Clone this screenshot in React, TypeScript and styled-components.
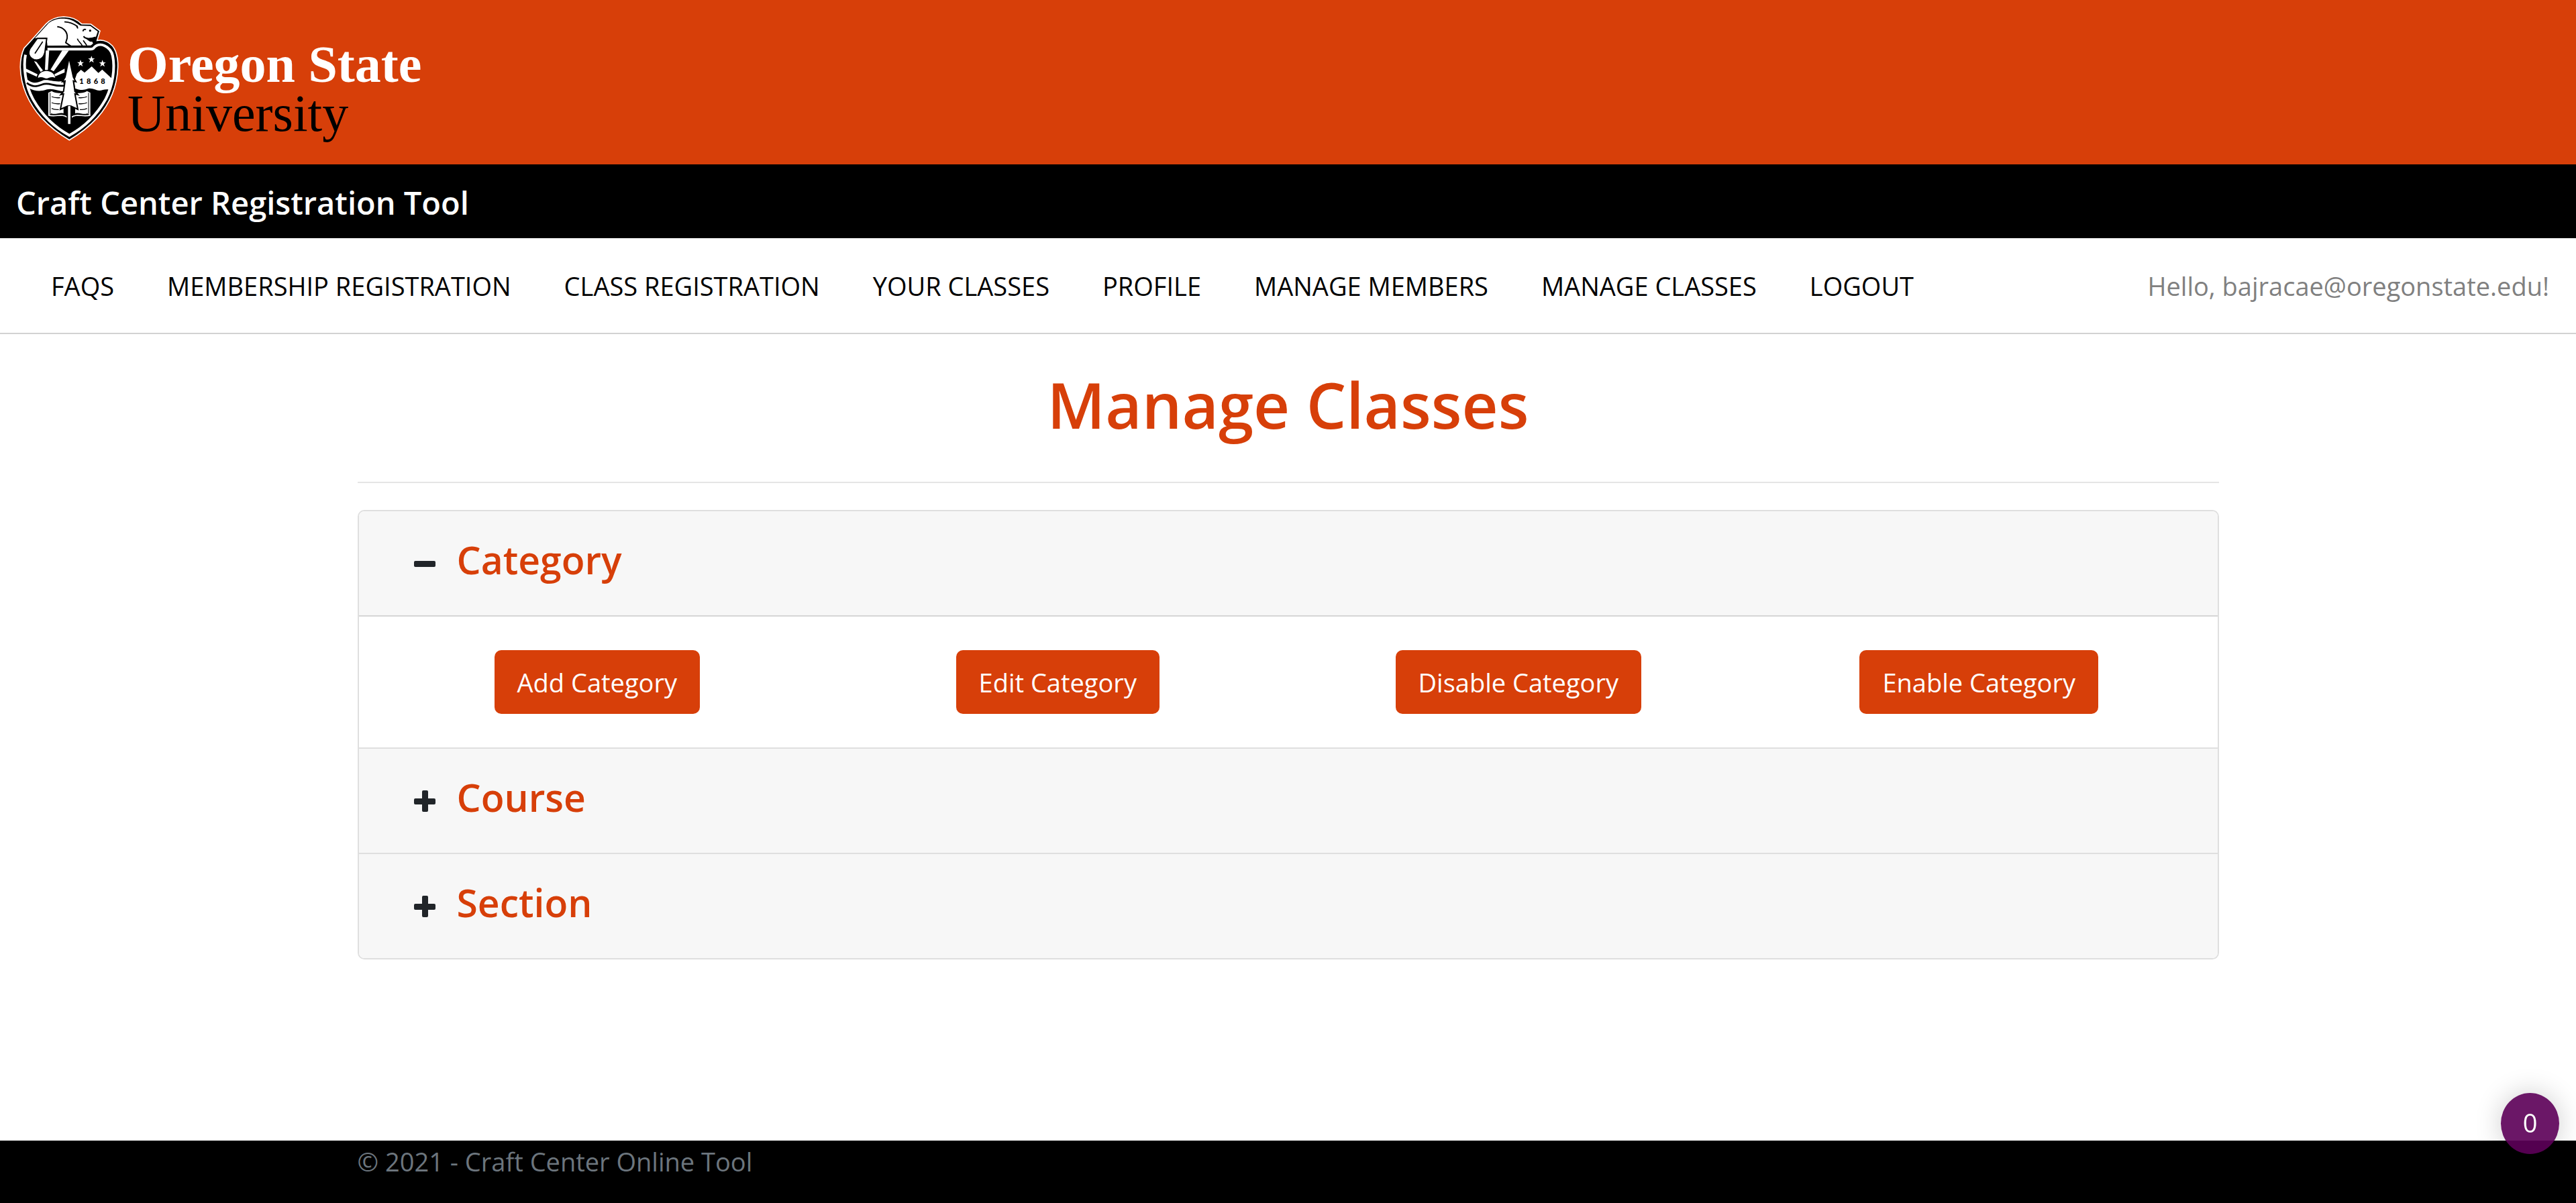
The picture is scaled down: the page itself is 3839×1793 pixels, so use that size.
import React, { useState } from 'react';
import styled, { createGlobalStyle } from 'styled-components';

const orange = '#d73f09';
const line = '#dfdfdf';

const GlobalStyle = createGlobalStyle`
  *, *::before, *::after { box-sizing: border-box; }
  body {
    margin: 0;
    background: #fff;
    color: #212529;
    font-family: "Open Sans", "Noto Sans", sans-serif;
    font-size: 38px;
    line-height: 60px;
  }
`;

const Page = styled.div`
  min-height: 100vh;
  display: flex;
  flex-direction: column;
`;

const Brand = styled.header`
  display: flex;
  align-items: flex-start;
  padding: 15px 20px 20px;
  background: ${orange};
`;

const Crest = styled.svg`
  flex: none;
  width: 170px;
  height: 210px;
`;

const Wordmark = styled.a`
  display: flex;
  flex-direction: column;
  padding-top: 44px;
  font-family: "Liberation Serif", serif;
  font-size: 78px;
  line-height: 73px;
  text-decoration: none;
`;

const BrandState = styled.span`
  color: #fff;
  font-weight: 700;
`;

const BrandKind = styled.span`
  color: #000;
`;

const ToolBar = styled.div`
  padding: 27px 24px 23px;
  background: #000;
`;

const ToolName = styled.h2`
  margin: 0;
  color: #fff;
  font-size: 47px;
  font-weight: 600;
  line-height: 60px;
`;

const Nav = styled.nav`
  display: flex;
  align-items: center;
  justify-content: space-between;
  padding: 41px 40px 40px 76px;
  border-bottom: 2px solid #d2d2d2;
`;

const NavList = styled.ul`
  display: flex;
  gap: 79px;
  margin: 0;
  padding: 0;
  list-style: none;
`;

const NavLink = styled.a`
  color: #000;
  text-decoration: none;
  text-transform: uppercase;
`;

const Greeting = styled.span`
  color: #808080;
`;

const Container = styled.div`
  width: 100%;
  max-width: 2850px;
  margin: 0 auto;
  padding: 0 38px;
`;

const Title = styled.h1`
  margin: 45px 0 55px;
  color: ${orange};
  font-size: 94px;
  font-weight: 600;
  line-height: 120px;
  text-align: center;
`;

const Rule = styled.hr`
  height: 2px;
  margin: 0 0 40px;
  border: 0;
  background: #e5e5e5;
`;

const Accordion = styled.div`
  border: 2px solid ${line};
  border-radius: 10px;
  overflow: hidden;
`;

const Panel = styled.section`
  & + & {
    border-top: 2px solid ${line};
  }
`;

const PanelHeading = styled.h4`
  margin: 0;
`;

const PanelToggle = styled.button`
  display: flex;
  align-items: baseline;
  gap: 32px;
  width: 100%;
  padding: 36px 82px 47px;
  border: 0;
  background: #f7f7f7;
  color: ${orange};
  font: inherit;
  font-size: 57px;
  font-weight: 600;
  line-height: 72px;
  text-align: left;
  cursor: pointer;
`;

const Sign = styled.svg`
  flex: none;
  width: 32px;
  height: 32px;
  fill: #212529;
`;

const PanelBody = styled.div`
  display: grid;
  grid-template-columns: repeat(4, 1fr);
  justify-items: center;
  padding: 50px 12px;
  border-top: 2px solid #d6d6d6;
`;

const Action = styled.button`
  padding: 18px 34px 17px;
  border: 0;
  border-radius: 10px;
  background: ${orange};
  color: #fff;
  font: inherit;
  white-space: nowrap;
  cursor: pointer;
`;

const Footer = styled.footer`
  margin-top: auto;
  padding: 1px 0 32px;
  background: #000;
  color: #6c757d;
`;

const Counter = styled.output`
  position: fixed;
  right: 25px;
  bottom: 73px;
  display: flex;
  align-items: center;
  justify-content: center;
  width: 87px;
  height: 91px;
  padding-bottom: 4px;
  border-radius: 50%;
  background: rgba(92, 0, 88, 0.91);
  box-shadow: 0 0 40px rgba(0, 0, 0, 0.2);
  color: #fff;
`;

const stars = [[300, 238], [349, 221], [398, 239]];
const starPath = 'M0-16L4-5L15-5L6 2L10 14L0 7L-10 14L-6 2L-15-5L-4-5Z';

function UniversityCrest() {
  return (
    <Crest viewBox="0 0 510 630" role="img" aria-label="Oregon State University crest">
      {/* silhouette: beaver on top of the shield */}
      <path
        d="M250 581C205 555 165 525 125 482C70 420 32 340 31 255C31 225 36 195 48 170L94 120L146 62C165 42 190 31 225 30C262 30 285 42 305 62L346 63L387 93L374 136C400 130 440 142 457 185C466 210 468 232 467 255C464 340 430 420 375 482C335 525 295 555 250 581Z"
        fill="#000" stroke="#fff" strokeWidth="5"
      />
      {/* inner shield ring and the bar under the beaver */}
      <path
        d="M54 200C44 250 52 335 88 400C128 470 185 525 250 560C315 525 372 470 412 400C445 335 455 260 444 205C436 165 385 135 357 172C352 175 349 175 345 175L152 175"
        fill="none" stroke="#fff" strokeWidth="12"
      />
      {/* beaver */}
      <path
        d="M96 126L158 58C178 42 202 37 228 38C262 40 280 56 300 70L344 71L377 96L368 122L338 126L350 134L356 150L346 158L152 159L148 124Z"
        fill="#fff"
      />
      <g fill="none" stroke="#000" strokeWidth="6">
        <path d="M196 74C222 77 244 96 240 126L234 146L256 161" />
        <path d="M228 53C252 52 270 62 288 74" strokeWidth="5" />
        <path d="M282 70L288 82" />
        <path d="M314 117C320 130 344 130 368 121" />
        <path d="M286 128C288 140 302 146 308 160M312 136L328 158" strokeWidth="5" />
        <path d="M311 95C312 86 320 84 324 88" />
      </g>
      <circle cx="343" cy="92" r="5" />
      <path d="M326 130L366 126L360 142L342 141Z" />
      {/* tail */}
      <path d="M106 127L149 127L141 188C136 216 114 228 92 222C68 212 64 192 74 172Z" fill="#fff" stroke="#000" strokeWidth="6" />
      <path d="M131 141L96 194" stroke="#000" strokeWidth="5" />
      {/* sun and rays */}
      <g fill="#fff">
        <path d="M145 181L160 181L154 268L141 268Z" />
        <path d="M218 181L248 181L180 274L166 266Z" />
        <path d="M92 228L103 232L132 270L122 277Z" />
        <path d="M56 262L108 287L104 298L56 276Z" />
        <path d="M229 262L229 279L187 296L183 287Z" />
        <path d="M110 303C114 262 180 262 187 303C168 294 155 306 148 306C140 306 126 294 110 303Z" />
        <path d="M57 306C85 332 105 326 124 318C150 304 172 324 222 318L230 362C200 366 182 348 150 355C120 366 92 362 72 350Z" />
      </g>
      <path d="M60 326C88 348 108 340 128 333C160 320 178 344 226 338" fill="none" stroke="#000" strokeWidth="8" />
      {/* mountains */}
      <path
        d="M272 318L284 284L302 267L318 280L350 252L380 281L397 266L440 306C438 328 434 342 428 356C408 352 398 360 384 360C368 360 352 346 332 352C312 360 296 358 276 350Z"
        fill="#fff"
      />
      {stars.map(([x, y]) => (
        <path key={x} d={starPath} transform={`translate(${x} ${y})`} fill="#fff" />
      ))}
      <text x="295 327 359 391" y="329" fontFamily="Lato, sans-serif" fontSize="33" fontWeight="900">1868</text>
      {/* open book */}
      <path d="M156 370L171 362C188 374 205 368 224 374L224 462C205 456 186 470 170 462L156 470ZM344 370L329 362C312 374 295 368 276 374L276 462C295 456 314 470 330 462L344 470Z" fill="#fff" />
      <g fill="none" stroke="#000" strokeWidth="4">
        <path d="M164 370L164 464M336 370L336 464" strokeWidth="3" />
        <path d="M171 387C184 394 196 392 209 392M171 414C184 421 196 419 209 419M171 440C184 447 190 445 203 445" />
        <path d="M329 387C316 394 304 392 291 392M329 414C316 421 304 419 291 419M329 440C316 447 310 445 297 445" />
      </g>
      <path d="M156 470C190 480 215 460 242 480M344 470C310 480 285 460 258 480" fill="none" stroke="#fff" strokeWidth="5" />
      {/* fir tree */}
      <path
        d="M249 212L268 300L279 320L268 317L275 364L288 378L275 375L288 444L258 430L258 512L241 512L241 430L210 444L224 375L212 378L224 364L231 317L219 320L231 300Z"
        fill="#fff" stroke="#000" strokeWidth="6"
      />
      <path d="M238 458L241 430L249 427L258 430L261 458" fill="none" stroke="#000" strokeWidth="3" />
    </Crest>
  );
}

function ToggleSign({ open }: { open: boolean }) {
  return (
    <Sign viewBox="0 0 32 32" aria-hidden="true">
      <rect x="0" y="12" width="32" height="9" rx="2" />
      {!open && <rect x="12" y="0" width="9" height="32" rx="2" />}
    </Sign>
  );
}

const links = [
  'FAQs', 'Membership Registration', 'Class Registration', 'Your Classes',
  'Profile', 'Manage Members', 'Manage Classes', 'Logout',
];
const panels = ['Category', 'Course', 'Section'];
const verbs = ['Add', 'Edit', 'Disable', 'Enable'];

export default function App() {
  const [openPanel, setOpenPanel] = useState<string | null>('Category');

  return (
    <Page>
      <GlobalStyle />
      <Brand>
        <UniversityCrest />
        <Wordmark href="#home">
          <BrandState>Oregon State</BrandState>
          <BrandKind>University</BrandKind>
        </Wordmark>
      </Brand>
      <ToolBar>
        <ToolName>Craft Center Registration Tool</ToolName>
      </ToolBar>
      <Nav>
        <NavList>
          {links.map((label) => (
            <li key={label}>
              <NavLink href="#">{label}</NavLink>
            </li>
          ))}
        </NavList>
        <Greeting>Hello, bajracae@oregonstate.edu!</Greeting>
      </Nav>
      <Container as="main">
        <Title>Manage Classes</Title>
        <Rule />
        <Accordion>
          {panels.map((name) => {
            const open = openPanel === name;
            return (
              <Panel key={name}>
                <PanelHeading>
                  <PanelToggle
                    type="button"
                    aria-expanded={open}
                    onClick={() => setOpenPanel(open ? null : name)}
                  >
                    <ToggleSign open={open} />
                    {name}
                  </PanelToggle>
                </PanelHeading>
                {open && (
                  <PanelBody>
                    {verbs.map((verb) => (
                      <Action key={verb} type="button">{verb} {name}</Action>
                    ))}
                  </PanelBody>
                )}
              </Panel>
            );
          })}
        </Accordion>
      </Container>
      <Footer>
        <Container>© 2021 - Craft Center Online Tool</Container>
      </Footer>
      <Counter>0</Counter>
    </Page>
  );
}
